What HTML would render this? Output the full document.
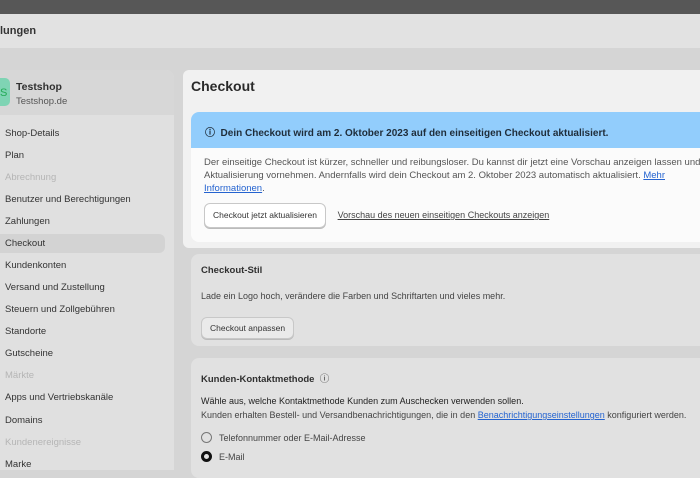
<!DOCTYPE html>
<html><head><meta charset="utf-8"><style>
*{box-sizing:border-box;margin:0;padding:0}
body{width:700px;height:465px;overflow:hidden;background:#d5d5d5;font-family:"Liberation Sans",sans-serif;color:#303030;position:relative}
.top{position:absolute;left:0;top:0;width:700px;height:14px;background:#575757}
.hdr{position:absolute;left:0;top:14px;width:700px;height:34px;background:#e2e2e2;font-size:11px;font-weight:bold;padding:11px 0 0 0;color:#333}
.side{position:absolute;left:0;top:70px;width:174px;height:400px;background:#e0e0e0;border-radius:0 8px 0 0}
.shop{height:45px;background:#d7d7d7;border-radius:0 8px 0 0;position:relative}
.av{position:absolute;left:-8px;top:8px;width:18px;height:28px;background:#7fd4b4;border-radius:5px;font-size:11px;padding:9px 0 0 8px;color:#2a5;}
.sn{position:absolute;left:16px;top:11px;font-size:10.5px;font-weight:bold}
.sd{position:absolute;left:16px;top:26px;font-size:9.5px;color:#555}
.nav{position:absolute;left:5px;font-size:9.5px;color:#333}
.dim{color:#b5b5b5}
.sel{position:absolute;left:0;top:234px;width:165px;height:19px;background:#d3d3d3;border-radius:0 6px 6px 0}
.card1{position:absolute;left:183px;top:70px;width:530px;height:178px;background:#f1f1f1;border-radius:6px}
.h1{position:absolute;left:8px;top:8px;font-size:14px;font-weight:bold;color:#2a2a2a}
.ban{position:absolute;left:8px;top:42px;width:520px;height:130px;background:#fbfbfb;border-radius:8px;overflow:hidden}
.bt{height:36px;background:#92cdfc;font-size:10px;font-weight:bold;padding:12px 0 0 14px;color:#1f2d3a}
.bb{font-size:9.5px;color:#555;line-height:13px;padding:8px 0 0 13px}
a{color:#2463d0;text-decoration:underline}
.btn{display:inline-block;border:1px solid #c8c8c8;border-radius:6px;background:#fff;font-size:8.5px;padding:5px 8px;color:#333;box-shadow:0 1px 0 #bbb}
.card{position:absolute;left:191px;width:520px;background:#e1e1e1;border-radius:8px}
.t{font-size:9.5px;font-weight:bold;position:absolute;left:10px}
.p{font-size:9px;color:#444;position:absolute;left:10px;white-space:nowrap}
.r{position:absolute;left:10px;width:11px;height:11px;border-radius:50%;border:1px solid #777}
</style></head><body>
<div class="top"></div>
<div class="hdr">lungen</div>
<div class="side">
<div class="shop"><div class="av">S</div><div class="sn">Testshop</div><div class="sd">Testshop.de</div></div>
</div>
<div class="sel"></div>
<div class="nav" style="top:128px">Shop-Details</div>
<div class="nav" style="top:150px">Plan</div>
<div class="nav dim" style="top:172px">Abrechnung</div>
<div class="nav" style="top:194px">Benutzer und Berechtigungen</div>
<div class="nav" style="top:216px">Zahlungen</div>
<div class="nav" style="top:238px">Checkout</div>
<div class="nav" style="top:260px">Kundenkonten</div>
<div class="nav" style="top:282px">Versand und Zustellung</div>
<div class="nav" style="top:304px">Steuern und Zollgebühren</div>
<div class="nav" style="top:326px">Standorte</div>
<div class="nav" style="top:348px">Gutscheine</div>
<div class="nav dim" style="top:370px">Märkte</div>
<div class="nav" style="top:392px">Apps und Vertriebskanäle</div>
<div class="nav" style="top:415px">Domains</div>
<div class="nav dim" style="top:437px">Kundenereignisse</div>
<div class="nav" style="top:459px">Marke</div>
<div class="card1"><div class="h1">Checkout</div>
<div class="ban"><div class="bt">ⓘ&nbsp; Dein Checkout wird am 2. Oktober 2023 auf den einseitigen Checkout aktualisiert.</div>
<div class="bb" style="white-space:nowrap">Der einseitige Checkout ist kürzer, schneller und reibungsloser. Du kannst dir jetzt eine Vorschau anzeigen lassen und die<br>Aktualisierung vornehmen. Andernfalls wird dein Checkout am 2. Oktober 2023 automatisch aktualisiert. <a>Mehr</a><br><a>Informationen</a>.
<div style="margin-top:8px"><span class="btn">Checkout jetzt aktualisieren</span> <span style="margin-left:9px;text-decoration:underline;color:#444;font-size:9px">Vorschau des neuen einseitigen Checkouts anzeigen</span></div></div>
</div></div>
<div class="card" style="top:254px;height:92px">
<div class="t" style="top:11px">Checkout-Stil</div>
<div class="p" style="top:37px">Lade ein Logo hoch, verändere die Farben und Schriftarten und vieles mehr.</div>
<div style="position:absolute;left:10px;top:63px"><span class="btn" style="background:#eaeaea">Checkout anpassen</span></div>
</div>
<div class="card" style="top:358px;height:120px">
<div class="t" style="top:13px">Kunden-Kontaktmethode &nbsp;<span style="font-weight:normal">ⓘ</span></div>
<div class="p" style="top:38px;color:#222">Wähle aus, welche Kontaktmethode Kunden zum Auschecken verwenden sollen.</div>
<div class="p" style="top:52px">Kunden erhalten Bestell- und Versandbenachrichtigungen, die in den <a>Benachrichtigungseinstellungen</a> konfiguriert werden.</div>
<div class="r" style="top:74px"></div><div class="p" style="top:75px;left:28px">Telefonnummer oder E-Mail-Adresse</div>
<div class="r" style="top:93px;border:3px solid #111"></div><div class="p" style="top:94px;left:28px">E-Mail</div>
</div>
</body></html>
